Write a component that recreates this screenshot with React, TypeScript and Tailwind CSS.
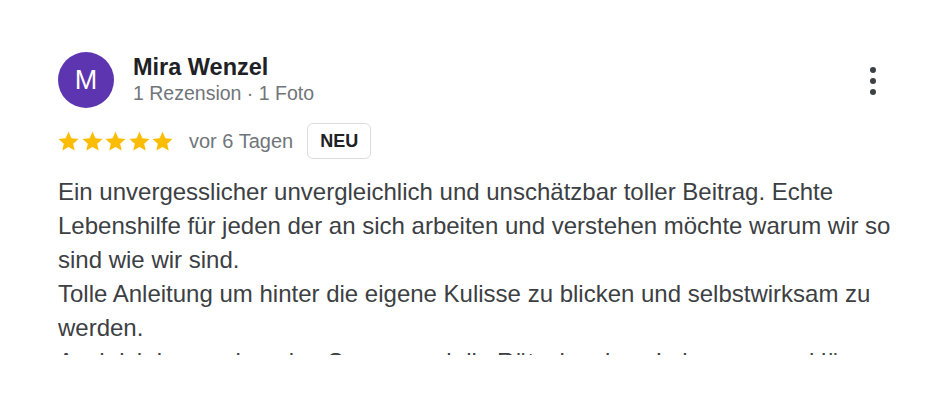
import React from 'react';

const Star = () => (
  <svg width="23" height="23" viewBox="0 0 24 24" className="fill-[#fbbc04]">
    <path d="M12 1.8l3.05 6.75 7.35.75-5.5 4.95 1.6 7.25L12 17.8l-6.5 3.7 1.6-7.25-5.5-4.95 7.35-.75z" />
  </svg>
);

const App = () => {
  const text =
    'Ein unvergesslicher unvergleichlich und unschätzbar toller Beitrag. Echte Lebenshilfe für jeden der an sich arbeiten und verstehen möchte warum wir so sind wie wir sind.\nTolle Anleitung um hinter die eigene Kulisse zu blicken und selbstwirksam zu werden.\nAuch ich kann mir meine Sorgen und die Rätsel meines Lebens nun erklären, ein Teil davon.';

  return (
    <div className="w-full h-[400px] bg-white font-['Liberation_Sans',Arial,sans-serif] pl-[58px] pr-[30px] pt-[52px]">
      <div className="flex items-start">
        <div className="w-[56px] h-[56px] rounded-full bg-[#5e35b1] text-white flex items-center justify-center text-[27px] shrink-0">
          M
        </div>
        <div className="ml-[19px] mt-[1px] flex-1">
          <div className="text-[23.5px] font-bold text-[#202124] leading-[28px]">Mira Wenzel</div>
          <div className="text-[19.5px] text-[#70757a] leading-[24px]">1 Rezension · 1 Foto</div>
        </div>
        <div className="w-[40px] flex flex-col items-center gap-[5px] mt-[15px] mr-[17px]">
          <span className="w-[6px] h-[6px] rounded-full bg-[#3c4043]" />
          <span className="w-[6px] h-[6px] rounded-full bg-[#3c4043]" />
          <span className="w-[6px] h-[6px] rounded-full bg-[#3c4043]" />
        </div>
      </div>

      <div className="flex items-center mt-[15px]">
        <div className="flex gap-[0.5px] -ml-[1px]">
          <Star />
          <Star />
          <Star />
          <Star />
          <Star />
        </div>
        <span className="ml-[15px] text-[20px] text-[#70757a]">vor 6 Tagen</span>
        <span className="ml-[14px] h-[36px] px-[12px] flex items-center border border-[#dadce0] rounded-[6px] text-[18px] font-bold text-[#202124]">
          NEU
        </span>
      </div>

      <div className="mt-[16px] w-[852px] h-[180px] overflow-hidden text-[24px] leading-[34px] text-[#3c4043] whitespace-pre-line">
        {text}
      </div>
    </div>
  );
};

export default App;
